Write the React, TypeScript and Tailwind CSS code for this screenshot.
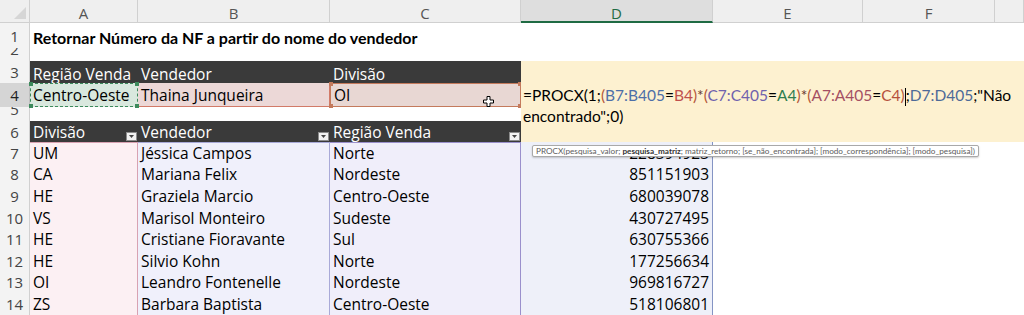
import React from "react";

function FilterBtn() {
  return (
    <div className="self-end mb-[1px] mr-[1px] w-[11px] h-[9px] bg-[#f2f2f2] border border-[#8c8c8c] flex items-center justify-center">
      <svg width="5" height="3" viewBox="0 0 5 3">
        <polygon points="0,0 5,0 2.5,3" fill="#444" />
      </svg>
    </div>
  );
}

function Handle({ cls }: { cls: string }) {
  return <div className={`absolute w-[4px] h-[4px] ${cls}`} />;
}

export default function App() {
  const rows: [string, string, string, string, string][] = [
    ["7", "UM", "Jéssica Campos", "Norte", "228394923"],
    ["8", "CA", "Mariana Felix", "Nordeste", "851151903"],
    ["9", "HE", "Graziela Marcio", "Centro-Oeste", "680039078"],
    ["10", "VS", "Marisol Monteiro", "Sudeste", "430727495"],
    ["11", "HE", "Cristiane Fioravante", "Sul", "630755366"],
    ["12", "HE", "Silvio Kohn", "Norte", "177256634"],
    ["13", "OI", "Leandro Fontenelle", "Nordeste", "969816727"],
    ["14", "ZS", "Barbara Baptista", "Centro-Oeste", "518106801"],
  ];

  const rh = "flex items-center justify-center bg-[#f3f3f3] border-r border-[#d0d0d0] overflow-hidden text-[#444] text-[15px]";
  const rhClip = "flex items-end justify-center bg-[#f3f3f3] border-r border-[#d0d0d0] overflow-hidden text-[#444] text-[15px]";
  const ch = "flex items-center justify-center pt-[4px] bg-[#efefef] border-r border-b border-[#d0d0d0] text-[#555] text-[15px]";

  return (
    <div className="relative w-[1024px] h-[315px] overflow-hidden bg-white font-['Open_Sans',sans-serif] text-[15.5px] text-black leading-[16px]">
      <div className="grid grid-cols-[30px_108px_192px_191px_192px_150px_132px_29px] grid-rows-[23px_25px_13px_22px_24px_14px_21px_repeat(8,21.6px)]">
        {/* Formula edit box over D3:G6 */}
        <div className="col-start-5 col-span-4 row-start-4 row-span-4 bg-[#fdf1d0] pl-[2px] pt-[24px] leading-[21px] font-['Lato',sans-serif] text-[15.5px] text-black whitespace-nowrap z-10">
          <div>
            =PROCX(1;
            <span className="text-[#b4583a]">(</span>
            <span className="text-[#4d6fa8]">B7:B405</span>=
            <span className="text-[#c0504d]">B4</span>
            <span className="text-[#b4583a]">)</span>
            <span className="text-[#6b3a30]">*</span>
            <span className="text-[#b4583a]">(</span>
            <span className="text-[#6f62ad]">C7:C405</span>=
            <span className="text-[#2f7d4f]">A4</span>
            <span className="text-[#b4583a]">)</span>
            <span className="text-[#6b3a30]">*</span>
            <span className="text-[#b4583a]">(</span>
            <span className="text-[#a44f63]">A7:A405</span>=
            <span className="text-[#b5503c]">C4</span>
            <span className="text-[#b4583a]">)</span>
            <span className="inline-block w-px h-[18px] bg-black align-middle"></span>;
            <span className="text-[#4d6a98]">D7:D405</span>;"Não
          </div>
          <div>encontrado";0)</div>
        </div>

        {/* Column headers */}
        <div className="relative bg-[#efefef] border-r border-b border-[#d0d0d0]">
          <svg className="absolute right-[3px] bottom-[3px]" width="12" height="12" viewBox="0 0 12 12">
            <polygon points="12,0 12,12 0,12" fill="#d6d6d6" />
          </svg>
        </div>
        <div className={ch}>A</div>
        <div className={ch}>B</div>
        <div className={ch}>C</div>
        <div className="flex items-center justify-center pt-[4px] bg-[#dedede] border-r border-b-2 border-b-[#1f6b43] border-r-[#d0d0d0] text-[#1f6b43] text-[15px]">D</div>
        <div className={ch}>E</div>
        <div className={ch}>F</div>
        <div className={ch}></div>

        {/* Row 1 */}
        <div className={rh}>1</div>
        <div className="col-span-7 flex items-center pt-[5px] px-[3px] font-['Lato',sans-serif] text-[16px] font-bold whitespace-nowrap">
          Retornar Número da NF a partir do nome do vendedor
        </div>

        {/* Row 2 */}
        <div className={rhClip}><span className="pb-[4px]">2</span></div>
        <div className="col-span-7"></div>

        {/* Row 3 */}
        <div className={rh}>3</div>
        <div className="bg-[#3a3a3a] text-white flex items-center pt-[4px] px-[3px] whitespace-nowrap">Região Venda</div>
        <div className="bg-[#3a3a3a] text-white flex items-center pt-[4px] px-[3px]">Vendedor</div>
        <div className="bg-[#3a3a3a] text-white flex items-center pt-[4px] px-[3px]">Divisão</div>

        {/* Row 4 */}
        <div className="flex items-center justify-center bg-[#d5d5d5] border-r border-[#c0c0c0] text-[#222] text-[15px]">4</div>
        <div className="relative bg-[#d9e8de] border border-dashed border-[#3d8a5c] flex items-center px-[2px] whitespace-nowrap">
          Centro-Oeste
          <Handle cls="-left-[2px] -top-[2px] bg-[#3d8a5c]" />
          <Handle cls="-right-[2px] -top-[2px] bg-[#3d8a5c]" />
          <Handle cls="-left-[2px] -bottom-[2px] bg-[#3d8a5c]" />
          <Handle cls="-right-[2px] -bottom-[2px] bg-[#3d8a5c]" />
        </div>
        <div className="bg-[#ecd8d7] border-b border-r border-[#d27a68] flex items-center px-[3px]">Thaina Junqueira</div>
        <div className="relative bg-[#e8d7d3] border border-[#c47a5c] flex items-center px-[3px]">
          OI
          <Handle cls="-left-[2px] -top-[2px] bg-[#c47a5c]" />
          <Handle cls="-right-[2px] -top-[2px] bg-[#c47a5c]" />
          <Handle cls="-left-[2px] -bottom-[2px] bg-[#c47a5c]" />
          <Handle cls="-right-[2px] -bottom-[2px] bg-[#c47a5c]" />
          <svg className="absolute left-[152px] top-[12px]" width="11" height="11" viewBox="0 0 11 11">
            <path d="M4 0.5h3v3.5h3.5v3h-3.5v3.5h-3v-3.5h-3.5v-3h3.5z" fill="#fff" stroke="#000" strokeWidth="1" />
          </svg>
        </div>

        {/* Row 5 */}
        <div className={rhClip}><span className="pb-[4px]">5</span></div>
        <div></div>
        <div></div>
        <div></div>

        {/* Row 6 */}
        <div className={rh}>6</div>
        <div className="bg-[#3a3a3a] text-white flex items-center justify-between pl-[3px]">
          <span>Divisão</span>
          <FilterBtn />
        </div>
        <div className="bg-[#3a3a3a] text-white flex items-center justify-between pl-[3px]">
          <span>Vendedor</span>
          <FilterBtn />
        </div>
        <div className="bg-[#3a3a3a] text-white flex items-center justify-between pl-[3px]">
          <span>Região Venda</span>
          <FilterBtn />
        </div>

        {/* Data rows */}
        {rows.map((r, i) => (
          <React.Fragment key={r[0]}>
            <div className={rh}>{r[0]}</div>
            <div className={`bg-[#fcf0f3] border-r border-[#d8a2b2] flex items-center px-[3px] ${i === 0 ? "border-t" : ""}`}>{r[1]}</div>
            <div className={`bg-[#f0f0fb] border-r border-[#a9aad8] flex items-center px-[3px] whitespace-nowrap ${i === 0 ? "border-t border-t-[#a9aad8]" : ""}`}>{r[2]}</div>
            <div className={`bg-[#f0eefa] border-r border-[#9a90cc] flex items-center px-[3px] whitespace-nowrap ${i === 0 ? "border-t border-t-[#9a90cc]" : ""}`}>{r[3]}</div>
            <div className="bg-[#eef0f9] border-r border-[#8494c4] flex items-center justify-end px-[3px]">{r[4]}</div>
            <div></div>
            <div></div>
            <div></div>
          </React.Fragment>
        ))}
      </div>

      {/* Function tooltip */}
      <div className="absolute left-[532px] top-[145px] h-[12px] px-[3px] bg-white border border-[#a9a9a9] rounded-[2px] shadow-[0_1px_2px_rgba(0,0,0,0.2)] flex items-center font-['Lato',sans-serif] text-[8.2px] leading-[10px] text-[#5c5c5c] whitespace-nowrap z-20">
        PROCX(pesquisa_valor;&nbsp;<span className="font-bold text-[#333]">pesquisa_matriz</span>; matriz_retorno; [se_não_encontrada]; [modo_correspondência]; [modo_pesquisa])
      </div>
    </div>
  );
}
